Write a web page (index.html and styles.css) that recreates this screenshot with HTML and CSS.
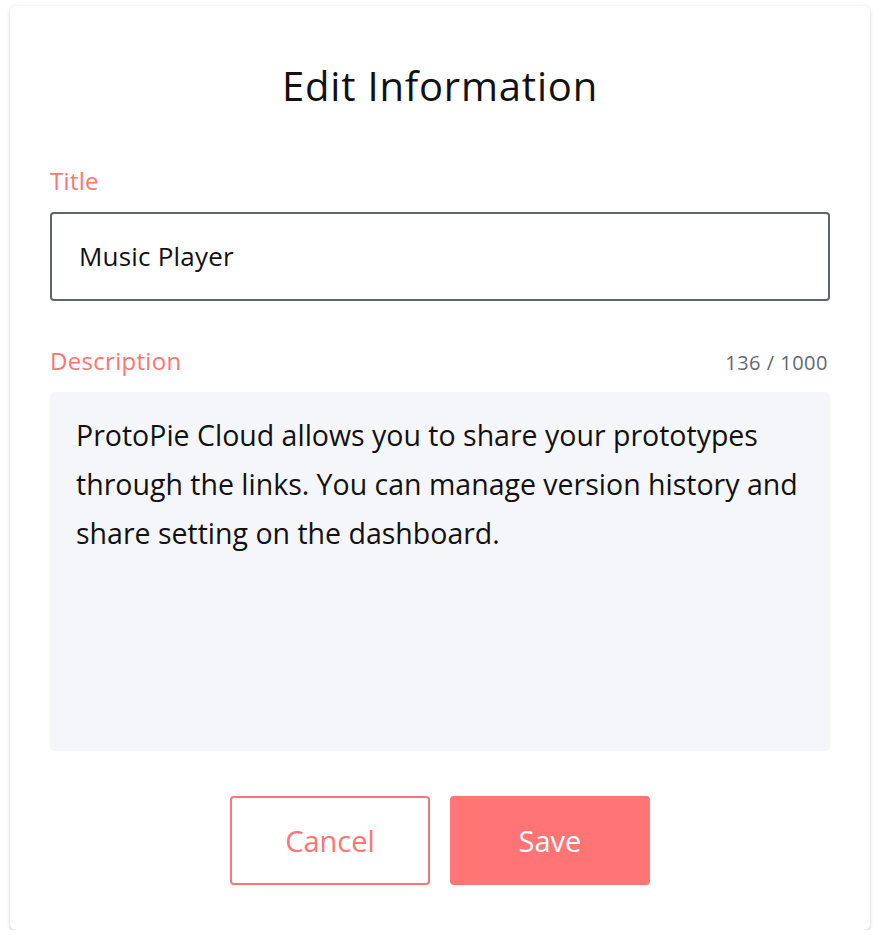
FILE: index.html
```html
<!DOCTYPE html>
<html lang="en">
<head>
    <meta charset="UTF-8">
    <meta name="viewport" content="width=device-width, initial-scale=1.0">
    <title>Edit Information</title>
    <link rel="stylesheet" href="styles.css">
</head>
<body>

    <div class="edit-card">
        <h1>Edit Information</h1>

        <div class="field">
            <label class="field-label" for="title">Title</label>
            <div class="title-input" id="title">Music Player</div>
        </div>

        <div class="field">
            <div class="field-head">
                <label class="field-label" for="description">Description</label>
                <span class="counter">136 / 1000</span>
            </div>
            <div class="description-box" id="description">
                ProtoPie Cloud allows you to share your prototypes through the links. You can manage version history and share setting on the dashboard.
            </div>
        </div>

        <div class="actions">
            <button class="btn btn-cancel">Cancel</button>
            <button class="btn btn-save">Save</button>
        </div>
    </div>

</body>
</html>
```

FILE: styles.css
```css
body {
    font-family: "Open Sans", Lato, sans-serif;
    margin: 0;
    padding: 6px 10px 0;
    background-color: #fff;
    color: #111;
}

.edit-card {
    width: 860px;
    height: 924px;
    box-sizing: border-box;
    padding: 56px 40px 0;
    background-color: #fff;
    border-radius: 6px;
    box-shadow: 0 1px 4px rgba(40, 50, 70, 0.18), 0 2px 2px rgba(40, 50, 70, 0.08);
}

.edit-card h1 {
    margin: 0 0 56px;
    font-size: 40px;
    font-weight: 400;
    line-height: 48px;
    letter-spacing: 0.8px;
    text-align: center;
}

.field {
    margin-bottom: 45px;
}

.field-head {
    display: flex;
    justify-content: space-between;
    align-items: baseline;
}

.field-label {
    display: block;
    font-size: 24px;
    line-height: 30px;
    letter-spacing: 0.3px;
    color: #ff7474;
    margin-bottom: 16px;
}

.counter {
    font-size: 20px;
    letter-spacing: 0.5px;
    color: #5f6873;
    margin-right: 2px;
}

.title-input {
    height: 89px;
    box-sizing: border-box;
    display: flex;
    align-items: center;
    padding: 0 27px 2px;
    border: 2px solid #5b6470;
    border-radius: 4px;
    font-size: 26px;
    letter-spacing: 0.2px;
}

.description-box {
    height: 359px;
    box-sizing: border-box;
    padding: 19px 20px 19px 26px;
    background-color: #f5f6fa;
    border-radius: 4px;
    font-size: 28.5px;
    line-height: 49px;
}

.actions {
    display: flex;
    justify-content: center;
    gap: 20px;
}

.btn {
    width: 200px;
    height: 89px;
    font-family: inherit;
    font-size: 29px;
    border-radius: 4px;
    cursor: pointer;
}

.btn-cancel {
    background-color: #fff;
    border: 2px solid #ff7474;
    color: #ff7474;
}

.btn-save {
    background-color: #ff7474;
    border: none;
    color: #fff;
}
```
